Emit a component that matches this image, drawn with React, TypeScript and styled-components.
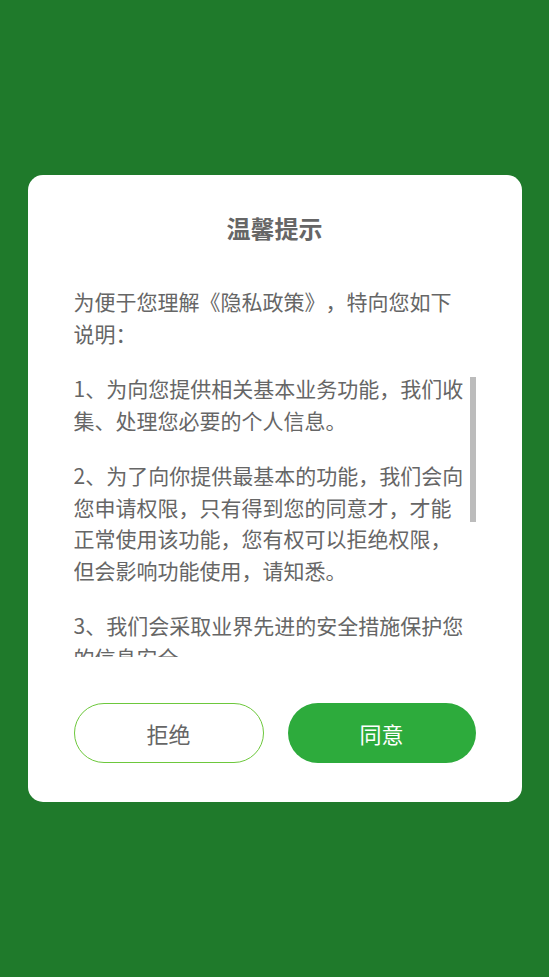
import React from 'react';
import styled, { createGlobalStyle } from 'styled-components';

const GlobalStyle = createGlobalStyle`
    html, body {
        margin: 0;
        padding: 0;
        background-color: #1f7a2b;
    }
    body {
        font-family: "Noto Sans CJK SC", "Noto Sans", sans-serif;
        text-spacing-trim: space-all;
    }
`;

const Screen = styled.div`
    display: flex;
    justify-content: center;
    align-items: center;
    width: 100%;
    height: 100vh;
    background-color: #1f7a2b;
`;

const Dialog = styled.div`
    display: flex;
    flex-direction: column;
    width: 494px;
    box-sizing: border-box;
    padding: 37px 46px 39px;
    background-color: #ffffff;
    border-radius: 15px;
`;

const Title = styled.div`
    font-size: 24px;
    font-weight: bold;
    line-height: 32px;
    color: #666666;
    text-align: center;
`;

const Intro = styled.p`
    margin: 42px 6px 24px 0;
    font-size: 21px;
    line-height: 31.5px;
    color: #666666;
`;

const ScrollWrap = styled.div`
    position: relative;
    height: 284px;
`;

const ScrollBox = styled.div`
    height: 100%;
    box-sizing: border-box;
    padding-right: 6px;
    overflow-y: auto;
    scrollbar-width: none;

    &::-webkit-scrollbar {
        display: none;
    }
`;

const ScrollThumb = styled.div`
    position: absolute;
    top: 4px;
    right: 0;
    width: 6px;
    height: 145px;
    background-color: #bcbcbc;
`;

const Item = styled.p`
    margin: 0 0 24px;
    font-size: 21px;
    line-height: 31.5px;
    color: #666666;

    &:last-child {
        margin-bottom: 0;
    }
`;

const Actions = styled.div`
    display: flex;
    gap: 24px;
    margin-top: 46px;
`;

const ActionButton = styled.button<{ primary?: boolean }>`
    flex: 1;
    height: 60px;
    padding: 0;
    border-radius: 30px;
    box-sizing: border-box;
    font-family: inherit;
    font-size: 22px;
    cursor: pointer;
    border: ${({ primary }) => (primary ? 'none' : '1.5px solid #6dc83c')};
    background-color: ${({ primary }) => (primary ? '#2dab3c' : '#ffffff')};
    color: ${({ primary }) => (primary ? '#ffffff' : '#666666')};
`;

const items = [
    '1、为向您提供相关基本业务功能，我们收集、处理您必要的个人信息。',
    '2、为了向你提供最基本的功能，我们会向您申请权限，只有得到您的同意才，才能正常使用该功能，您有权可以拒绝权限，但会影响功能使用，请知悉。',
    '3、我们会采取业界先进的安全措施保护您的信息安全。',
    '4、您可以在“设置”中随时查看、更正或删除您的个人信息，也可以注销账号。我们不会向任何第三方提供、出售、出租、分享或交易您的个人信息。',
    '5、如您同意，请点击“同意”开始使用我们的产品和服务。',
];

export default function App() {
    return (
        <>
            <GlobalStyle />
            <Screen>
                <Dialog>
                    <Title>温馨提示</Title>
                    <Intro>为便于您理解《隐私政策》，特向您如下说明：</Intro>
                    <ScrollWrap>
                        <ScrollBox>
                            {items.map((text) => (
                                <Item key={text}>{text}</Item>
                            ))}
                        </ScrollBox>
                        <ScrollThumb />
                    </ScrollWrap>
                    <Actions>
                        <ActionButton>拒绝</ActionButton>
                        <ActionButton primary>同意</ActionButton>
                    </Actions>
                </Dialog>
            </Screen>
        </>
    );
}
